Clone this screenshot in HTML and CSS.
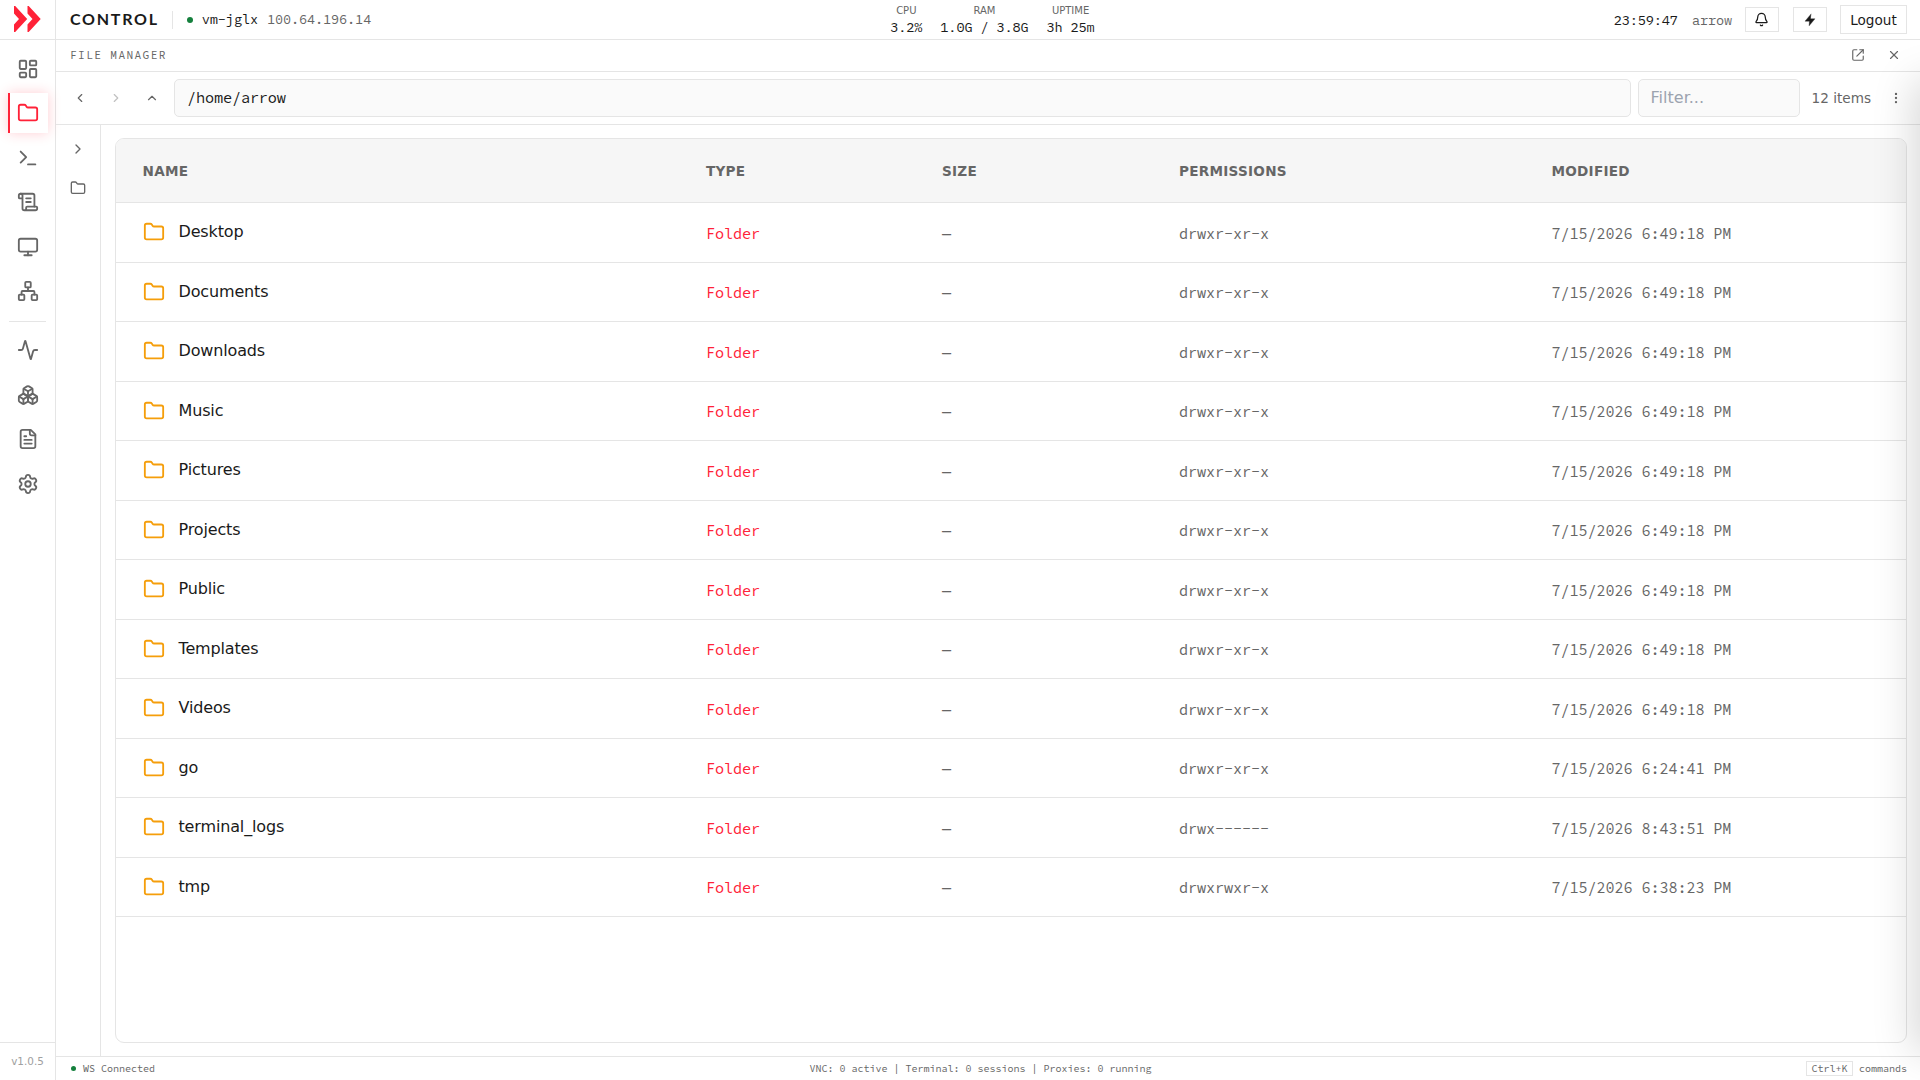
FILE: index.html
```html
<!DOCTYPE html>
<html lang="en">
<head>
<meta charset="utf-8">
<title>Control - File Manager</title>
<link rel="stylesheet" href="styles.css">
</head>
<body>
<svg class="defs" aria-hidden="true">
  <symbol id="i-folder" viewBox="0 0 24 24"><path d="M20 20a2 2 0 0 0 2-2V8a2 2 0 0 0-2-2h-7.9a2 2 0 0 1-1.69-.9L9.6 3.9A2 2 0 0 0 7.93 3H4a2 2 0 0 0-2 2v13a2 2 0 0 0 2 2Z"/></symbol>
  <symbol id="i-right" viewBox="0 0 24 24"><path d="m9 18 6-6-6-6"/></symbol>
</svg>
<div class="app">
  <aside class="nav">
    <div class="logo">
      <svg width="28" height="28" viewBox="0 0 28 28"><path d="M1 1h1.2L14.2 14 2.2 27H1V19.5L6 14 1 8.500z"/><path d="M14.500 1h1.200L27.700 14 15.700 27h-1.200V19.500L19.500 14l-5-5.500z"/></svg>
    </div>
    <nav class="nav-items">
      <a class="nav-item"><svg viewBox="0 0 24 24"><rect width="7" height="9" x="3" y="3" rx="1"/><rect width="7" height="5" x="14" y="3" rx="1"/><rect width="7" height="9" x="14" y="12" rx="1"/><rect width="7" height="5" x="3" y="16" rx="1"/></svg></a>
      <a class="nav-item active"><svg><use href="#i-folder"/></svg></a>
      <a class="nav-item"><svg viewBox="0 0 24 24"><path d="m4 17 6-6-6-6"/><path d="M12 19h8"/></svg></a>
      <a class="nav-item"><svg viewBox="0 0 24 24"><path d="M15 12h-5"/><path d="M15 8h-5"/><path d="M19 17V5a2 2 0 0 0-2-2H4"/><path d="M8 21h12a2 2 0 0 0 2-2v-1a1 1 0 0 0-1-1H11a1 1 0 0 0-1 1v1a2 2 0 1 1-4 0V5a2 2 0 1 0-4 0v2a1 1 0 0 0 1 1h3"/></svg></a>
      <a class="nav-item"><svg viewBox="0 0 24 24"><rect width="20" height="14" x="2" y="3" rx="2"/><path d="M8 21h8"/><path d="M12 17v4"/></svg></a>
      <a class="nav-item"><svg viewBox="0 0 24 24"><rect x="16" y="16" width="6" height="6" rx="1"/><rect x="2" y="16" width="6" height="6" rx="1"/><rect x="9" y="2" width="6" height="6" rx="1"/><path d="M5 16v-3a1 1 0 0 1 1-1h12a1 1 0 0 1 1 1v3"/><path d="M12 12V8"/></svg></a>
      <span class="nav-sep"></span>
      <a class="nav-item"><svg viewBox="0 0 24 24"><path d="M22 12h-2.480a2 2 0 0 0-1.930 1.460l-2.350 8.360a.25.25 0 0 1-.48 0L9.240 2.180a.25.25 0 0 0-.48 0l-2.350 8.360A2 2 0 0 1 4.490 12H2"/></svg></a>
      <a class="nav-item"><svg viewBox="0 0 24 24"><path d="M2.970 12.920A2 2 0 0 0 2 14.630v3.240a2 2 0 0 0 .97 1.710l3 1.800a2 2 0 0 0 2.060 0L12 19v-5.500l-5-3-4.030 2.420Z"/><path d="m7 16.500-4.740-2.850"/><path d="m7 16.500 5-3"/><path d="M7 16.500v5.170"/><path d="M12 13.500V19l3.970 2.380a2 2 0 0 0 2.060 0l3-1.800a2 2 0 0 0 .97-1.710v-3.240a2 2 0 0 0-.97-1.710L17 10.500l-5 3Z"/><path d="m17 16.500-5-3"/><path d="m17 16.500 4.740-2.850"/><path d="M17 16.500v5.170"/><path d="M7.970 4.420A2 2 0 0 0 7 6.130v4.370l5 3 5-3V6.130a2 2 0 0 0-.97-1.710l-3-1.800a2 2 0 0 0-2.060 0l-3 1.800Z"/><path d="M12 8 7.260 5.150"/><path d="m12 8 4.740-2.850"/><path d="M12 13.500V8"/></svg></a>
      <a class="nav-item"><svg viewBox="0 0 24 24"><path d="M15 2H6a2 2 0 0 0-2 2v16a2 2 0 0 0 2 2h12a2 2 0 0 0 2-2V7Z"/><path d="M14 2v4a2 2 0 0 0 2 2h4"/><path d="M10 9H8"/><path d="M16 13H8"/><path d="M16 17H8"/></svg></a>
      <a class="nav-item"><svg viewBox="0 0 24 24"><path d="M9.671 4.136a2.340 2.340 0 0 1 4.659 0 2.340 2.340 0 0 0 3.319 1.915 2.340 2.340 0 0 1 2.330 4.033 2.340 2.340 0 0 0 0 3.831 2.340 2.340 0 0 1-2.330 4.033 2.340 2.340 0 0 0-3.319 1.915 2.340 2.340 0 0 1-4.659 0 2.340 2.340 0 0 0-3.320-1.915 2.340 2.340 0 0 1-2.330-4.033 2.340 2.340 0 0 0 0-3.831A2.340 2.340 0 0 1 6.350 6.051a2.340 2.340 0 0 0 3.319-1.915"/><circle cx="12" cy="12" r="3"/></svg></a>
    </nav>
    <div class="version">v1.0.5</div>
  </aside>

  <div class="main">
    <header class="topbar">
      <div class="top-left">
        <span class="brand">CONTROL</span>
        <span class="divider"></span>
        <span class="dot"></span>
        <span class="host">vm-jglx</span>
        <span class="ip">100.64.196.14</span>
      </div>
      <div class="stats">
        <div class="stat"><span class="stat-label">CPU</span><span class="stat-value">3.2%</span></div>
        <div class="stat"><span class="stat-label">RAM</span><span class="stat-value">1.0G / 3.8G</span></div>
        <div class="stat"><span class="stat-label">UPTIME</span><span class="stat-value">3h 25m</span></div>
      </div>
      <div class="top-right">
        <span class="clock">23:59:47</span>
        <span class="user">arrow</span>
        <button class="icon-btn bell"><svg viewBox="0 0 24 24"><path d="M10.268 21a2 2 0 0 0 3.464 0"/><path d="M3.262 15.326A1 1 0 0 0 4 17h16a1 1 0 0 0 .74-1.673C19.410 13.956 18 12.499 18 8A6 6 0 0 0 6 8c0 4.499-1.411 5.956-2.738 7.326"/></svg></button>
        <button class="icon-btn zap"><svg viewBox="0 0 24 24"><path d="M13.500 2 3.500 14H11l-.5 8L20.500 10H13z"/></svg></button>
        <button class="logout">Logout</button>
      </div>
    </header>

    <div class="titlebar">
      <span class="title">FILE MANAGER</span>
      <span class="title-actions">
        <svg class="popout" viewBox="0 0 24 24"><path d="M15 3h6v6"/><path d="M10 14 21 3"/><path d="M21 14v5a2 2 0 0 1-2 2H5a2 2 0 0 1-2-2V5a2 2 0 0 1 2-2h5"/></svg>
        <svg class="close" viewBox="0 0 24 24"><path d="M18 6 6 18"/><path d="m6 6 12 12"/></svg>
      </span>
    </div>

    <div class="toolbar">
      <button class="tool"><svg viewBox="0 0 24 24"><path d="m15 18-6-6 6-6"/></svg></button>
      <button class="tool disabled"><svg><use href="#i-right"/></svg></button>
      <button class="tool"><svg viewBox="0 0 24 24"><path d="m18 15-6-6-6 6"/></svg></button>
      <div class="path">/home/arrow</div>
      <div class="filter">Filter...</div>
      <span class="count">12 items</span>
      <button class="tool more"><svg viewBox="0 0 24 24"><circle cx="12" cy="12" r="1"/><circle cx="12" cy="5" r="1"/><circle cx="12" cy="19" r="1"/></svg></button>
    </div>

    <div class="content">
      <div class="rail">
        <svg><use href="#i-right"/></svg>
        <svg><use href="#i-folder"/></svg>
      </div>
      <div class="pane">
        <div class="files" id="files">
          <div class="row head"><span>NAME</span><span>TYPE</span><span>SIZE</span><span>PERMISSIONS</span><span>MODIFIED</span></div>
        </div>
      </div>
    </div>

    <footer class="statusbar">
      <span class="ws"><span class="dot small"></span>WS Connected</span>
      <span>VNC: 0 active | Terminal: 0 sessions | Proxies: 0 running</span>
      <span class="hint"><kbd>Ctrl+K</kbd>commands</span>
    </footer>
  </div>
</div>
<div class="drawer-edge"></div>
<script src="files.js"></script>
</body>
</html>
```
FILE: files.js
```js
const day = '7/15/2026 ';
const entries = [
  ['Desktop', 'drwxr-xr-x', '6:49:18 PM'],
  ['Documents', 'drwxr-xr-x', '6:49:18 PM'],
  ['Downloads', 'drwxr-xr-x', '6:49:18 PM'],
  ['Music', 'drwxr-xr-x', '6:49:18 PM'],
  ['Pictures', 'drwxr-xr-x', '6:49:18 PM'],
  ['Projects', 'drwxr-xr-x', '6:49:18 PM'],
  ['Public', 'drwxr-xr-x', '6:49:18 PM'],
  ['Templates', 'drwxr-xr-x', '6:49:18 PM'],
  ['Videos', 'drwxr-xr-x', '6:49:18 PM'],
  ['go', 'drwxr-xr-x', '6:24:41 PM'],
  ['terminal_logs', 'drwx------', '8:43:51 PM'],
  ['tmp', 'drwxrwxr-x', '6:38:23 PM'],
];
const files = document.getElementById('files');
for (const [name, perms, time] of entries) {
  const row = document.createElement('div');
  row.className = 'row';
  row.innerHTML =
    `<span class="name"><svg><use href="#i-folder"/></svg><span>${name}</span></span>` +
    `<span class="mono type">Folder</span><span class="mono">—</span>` +
    `<span class="mono">${perms}</span><span class="mono">${day}${time}</span>`;
  files.append(row);
}
```
FILE: styles.css
```css
:root {
  --line: #e5e5e5;
  --text: #1a1a1a;
  --muted: #666;
  --accent: #ff2238;
  --sans: "DejaVu Sans", sans-serif;
  --code: "Source Code Pro", "Noto Sans Mono", monospace;
  --mono: "IBM Plex Mono", "Liberation Mono", monospace;
}
* { box-sizing: border-box; }
body { margin: 0; height: 100vh; overflow: hidden; position: relative; background: #fff; color: var(--text); font-family: var(--sans); font-size: 16px; }
button { margin: 0; padding: 0; border: 0; background: none; color: inherit; font: inherit; }
svg { display: block; flex: none; fill: none; stroke: currentColor; stroke-width: 2; stroke-linecap: round; stroke-linejoin: round; }
.defs { display: none; }
.app { display: flex; height: 100vh; }

.nav { width: 56px; flex: none; display: flex; flex-direction: column; border-right: 1px solid var(--line); }
.logo { height: 40px; padding: 5px 13px; border-bottom: 1px solid var(--line); }
.logo svg { fill: var(--accent); stroke: none; }
.nav-items { flex: 1; display: flex; flex-direction: column; align-items: center; gap: 4.4px; padding: 9px 0 0 1px; }
.nav-item { width: 40px; height: 40px; display: flex; align-items: center; justify-content: center; color: var(--muted); }
.nav-item svg { width: 22px; height: 22px; }
.nav-item.active { color: var(--accent); box-shadow: inset 2px 0 0 var(--accent), 0 0 12px rgba(255, 34, 56, .22); }
.nav-sep { width: 37px; height: 1px; margin: 5.6px 1px 4px 0; background: var(--line); }
.version { height: 38px; border-top: 1px solid var(--line); color: #a0a0a0; font-size: 10.4px; line-height: 37px; text-align: center; }

.main { flex: 1; min-width: 0; display: flex; flex-direction: column; }
.topbar { height: 40px; flex: none; display: flex; justify-content: space-between; align-items: center; padding: 0 13px 0 14px; border-bottom: 1px solid var(--line); }
.top-left { display: flex; align-items: center; font-family: var(--code); font-size: 13.6px; letter-spacing: -.14px; }
.brand { padding-bottom: 1px; font: 700 16px/20px Lato, sans-serif; letter-spacing: 1.75px; }
.divider { width: 1px; height: 18px; margin: 0 14px 0 13px; background: var(--line); }
.dot { width: 6px; height: 6px; border-radius: 50%; background: #15803d; }
.dot.small { width: 5px; height: 5px; margin: 0 7px 0 1px; }
.host { margin: 0 9px; }
.ip, .user { color: var(--muted); }
.stats { display: flex; gap: 18px; }
.stat { display: flex; flex-direction: column; align-items: center; }
.stat-label { color: var(--muted); font-size: 10px; line-height: 14px; }
.stat-value { font: 13.6px/18px var(--mono); letter-spacing: -.14px; }
.top-right { display: flex; justify-content: flex-end; align-items: center; gap: 14px; font: 13.6px var(--mono); letter-spacing: -.14px; }
.icon-btn { width: 34px; height: 25px; display: flex; align-items: center; justify-content: center; border: 1px solid var(--line); }
.bell svg { width: 15px; height: 15px; }
.user { margin-right: -1px; }
.zap svg { width: 14px; height: 14px; fill: currentColor; stroke-width: .6; }
.logout { width: 67px; height: 29px; margin-left: -1px; border: 1px solid var(--line); font: 13.6px var(--sans); }

.titlebar { height: 32px; flex: none; display: flex; justify-content: space-between; align-items: center; padding: 0 19px 1px 14px; border-bottom: 1px solid var(--line); color: var(--muted); }
.title { font: 11.2px var(--code); letter-spacing: 1.35px; }
.title-actions { display: flex; align-items: center; gap: 22px; }
.popout, .close { width: 14px; height: 14px; }

.toolbar { height: 53px; flex: none; display: flex; align-items: center; padding: 0 10px; border-bottom: 1px solid var(--line); }
.tool { width: 28px; height: 28px; margin-right: 8px; display: flex; align-items: center; justify-content: center; color: var(--muted); }
.tool svg { width: 14px; height: 14px; }
.tool.disabled { opacity: .4; }
.path, .filter { height: 38px; padding: 0 12px; border: 1px solid var(--line); border-radius: 5px; background: #fafafa; line-height: 35px; }
.path { flex: 1; font-family: var(--code); font-size: 15.2px; letter-spacing: -.13px; }
.filter { width: 162px; margin: 0 12px 0 7px; color: #9ca3af; }
.count { color: var(--muted); font-size: 13.6px; }
.more { margin: 0 0 0 11px; }

.content { flex: 1; min-height: 0; display: flex; }
.rail { width: 45px; flex: none; display: flex; flex-direction: column; align-items: center; gap: 23px; padding-top: 16px; border-right: 1px solid var(--line); color: var(--muted); }
.rail svg { width: 16px; height: 16px; }
.pane { flex: 1; min-width: 0; padding: 13px 13px 13px 14px; }
.files { height: 100%; overflow: hidden; border: 1px solid var(--line); border-radius: 9px; }
.row { height: 59.5px; display: grid; grid-template-columns: 563.5px 236px 237px 372.500px 1fr; align-items: center; padding-left: 26.500px; border-bottom: 1px solid var(--line); }
.row.head { height: 64px; background: #f6f6f6; color: var(--muted); font-size: 13.6px; font-weight: 700; letter-spacing: .25px; }
.name { display: flex; align-items: center; gap: 14px; letter-spacing: -.15px; }
.name span { padding-bottom: 1px; }
.name svg { width: 22px; height: 22px; color: #f59e0b; }
.mono { padding-top: 2.4px; color: var(--muted); font-family: var(--code); font-size: 15.2px; letter-spacing: -.12px; }
.mono.type { color: var(--accent); }

.statusbar { height: 24px; flex: none; display: flex; justify-content: space-between; align-items: center; padding: 0 13px 0 14px; border-top: 1px solid var(--line); color: var(--muted); font: 10px var(--code); }
.ws { display: flex; align-items: center; }
.hint { display: flex; align-items: center; gap: 6px; }
.hint kbd { padding: 0 4.4px; border: 1px solid var(--line); font: inherit; line-height: 13px; }

/* shadow cast by the closed side drawer along the right edge */
.drawer-edge { position: absolute; top: 40px; right: 0; bottom: 0; width: 70px; overflow: hidden; pointer-events: none; }
.drawer-edge::after { content: ""; position: absolute; left: 100%; top: 40px; bottom: 28px; width: 100px; box-shadow: -8px 0 40px rgba(0, 0, 0, .15); }
```
